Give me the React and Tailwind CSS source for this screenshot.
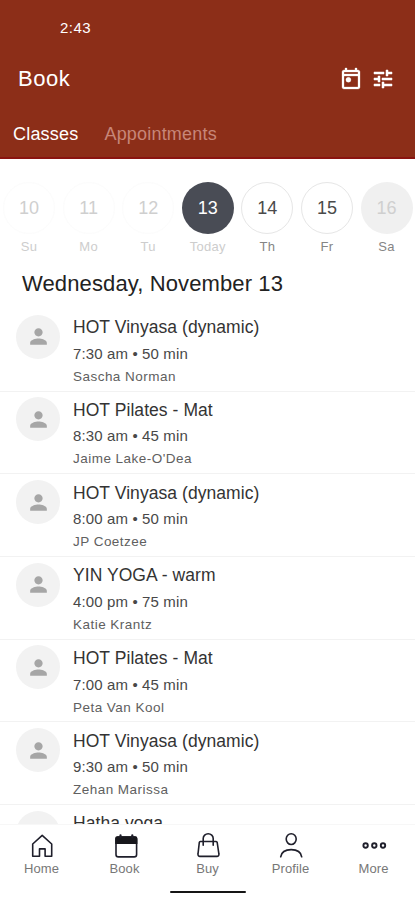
import React from 'react';

const past = 'border border-[#fcfcfc] text-[#cfcfcf]';
const open = 'border border-[#e6e6e6] text-[#4a4a4a]';

const days = [
  { n: '10', d: 'Su', circle: past, label: 'text-[#cdcdcd]' },
  { n: '11', d: 'Mo', circle: past, label: 'text-[#cdcdcd]' },
  { n: '12', d: 'Tu', circle: past, label: 'text-[#cdcdcd]' },
  { n: '13', d: 'Today', circle: 'bg-[#494c55] text-white', label: 'text-[#cdcdcd]' },
  { n: '14', d: 'Th', circle: open, label: 'text-[#858585]' },
  { n: '15', d: 'Fr', circle: open, label: 'text-[#858585]' },
  { n: '16', d: 'Sa', circle: 'bg-[#f0f0f0] text-[#cfcfcf]', label: 'text-[#858585]' },
];

const classes = [
  { title: 'HOT Vinyasa (dynamic)', time: '7:30 am • 50 min', who: 'Sascha Norman' },
  { title: 'HOT Pilates - Mat', time: '8:30 am • 45 min', who: "Jaime Lake-O'Dea" },
  { title: 'HOT Vinyasa (dynamic)', time: '8:00 am • 50 min', who: 'JP Coetzee' },
  { title: 'YIN YOGA - warm', time: '4:00 pm • 75 min', who: 'Katie Krantz' },
  { title: 'HOT Pilates - Mat', time: '7:00 am • 45 min', who: 'Peta Van Kool' },
  { title: 'HOT Vinyasa (dynamic)', time: '9:30 am • 50 min', who: 'Zehan Marissa' },
  { title: 'Hatha yoga', time: '', who: '', empty: true },
];

function CalendarIcon() {
  return (
    <svg className="h-6 w-6" viewBox="0 0 24 24" fill="white" stroke="white" strokeWidth="0.3">
      <path d="M19 3h-1V1h-2v2H8V1H6v2H5c-1.1 0-2 .9-2 2v15c0 1.1.9 2 2 2h14c1.1 0 2-.9 2-2V5c0-1.1-.9-2-2-2zm0 17H5V9h14v11zm0-13H5V5h14v2z" />
      <circle cx="9.4" cy="12.8" r="2.5" />
    </svg>
  );
}

function TuneIcon() {
  return (
    <svg className="h-6 w-6" viewBox="0 0 24 24" fill="white" stroke="white" strokeWidth="0.5">
      <path d="M3 17v2h6v-2H3zM3 5v2h10V5H3zm10 16v-2h8v-2h-8v-2h-2v6h2zM7 9v2H3v2h4v2h2V9H7zm14 4v-2H11v2h10zm-6-4h2V7h4V5h-4V3h-2v6z" />
    </svg>
  );
}

function Avatar({ empty }) {
  return (
    <div className="ml-4 mt-[5.7px] flex h-11 w-11 shrink-0 items-center justify-center rounded-full bg-[#f2f2f2]">
      {!empty && (
        <svg className="h-[25px] w-[25px]" viewBox="0 0 24 24" fill="#a6a6a6">
          <path d="M12 12c2.21 0 4-1.79 4-4s-1.79-4-4-4-4 1.79-4 4 1.79 4 4 4zm0 2c-2.67 0-8 1.34-8 4v2h16v-2c0-2.66-5.33-4-8-4z" />
        </svg>
      )}
    </div>
  );
}

const stroke = { fill: 'none', stroke: '#1f1f2b', strokeWidth: 1.6, strokeLinejoin: 'round', strokeLinecap: 'round' };

const tabs = [
  {
    label: 'Home',
    icon: <path {...stroke} d="M4.7 12 14.2 3.4l9.5 8.600V24.300h-6.600v-7.400h-5.600v7.400H4.700z" />,
  },
  {
    label: 'Book',
    icon: (
      <>
        <rect {...stroke} x="5" y="5" width="20.6" height="19.900" rx="2.400" />
        <path fill="#17171c" d="M4.200 12V6.500A2.200 2.200 0 0 1 6.400 4.200h17.800A2.200 2.200 0 0 1 26.400 6.500V12z" />
        <path {...stroke} strokeWidth="2.200" d="M9.500 3.300v2M21.300 3.300v2" />
      </>
    ),
  },
  {
    label: 'Buy',
    icon: (
      <>
        <path {...stroke} d="M6.300 9.500h15.800q.9 0 1.100 1l1.700 11.500a2 2 0 0 1-2 2.400H6a2 2 0 0 1-2-2.400l1.300-11.500q.2-1 1-1z" />
        <path {...stroke} d="M9.200 13.300V6.600a5 4.900 0 0 1 10 0V13.300" />
      </>
    ),
  },
  {
    label: 'Profile',
    icon: (
      <>
        <ellipse {...stroke} cx="14.200" cy="7.100" rx="5" ry="5.400" />
        <path {...stroke} d="M3.700 24.800c.700-4.600 4.200-7.200 10.500-7.200s9.800 2.600 10.500 7.200" />
      </>
    ),
  },
  {
    label: 'More',
    icon: (
      <>
        <circle {...stroke} strokeWidth="1.900" cx="5.600" cy="13.500" r="2.200" />
        <circle {...stroke} strokeWidth="1.900" cx="14.300" cy="13.500" r="2.200" />
        <circle {...stroke} strokeWidth="1.900" cx="23" cy="13.500" r="2.200" />
      </>
    ),
  },
];

export default function App() {
  return (
    <div className="flex h-[900px] w-[415px] flex-col overflow-hidden bg-white font-['Liberation_Sans',Arial,sans-serif]">
      <header className="flex h-[159px] shrink-0 flex-col border-b-2 border-[#8a1410] bg-[#8c2e18] text-white">
        <div className="pl-[60px] pt-[18px] text-[15px] leading-5 tracking-[0.5px]">2:43</div>
        <div className="mt-[25px] flex h-8 items-center pl-[18px] pr-5">
          <h1 className="flex-1 text-[22px] leading-8 tracking-[0.5px]">Book</h1>
          <CalendarIcon />
          <span className="ml-2 flex"><TuneIcon /></span>
        </div>
        <nav className="mt-[27px] flex pl-[13px] text-[18px] leading-6 tracking-[0.2px]">
          <span>Classes</span>
          <span className="ml-[26px] text-[#c78678]">Appointments</span>
        </nav>
      </header>

      <section className="flex h-[97px] w-[420px] shrink-0 pt-[23px]">
        {days.map((day) => (
          <div key={day.n} className="-ml-px mr-[0.6px] flex w-[60px] shrink-0 flex-col items-center">
            <div className={'flex h-[52px] w-[52px] items-center justify-center rounded-full text-[18px] ' + day.circle}>{day.n}</div>
            <div className={'mt-[5px] text-[13px] leading-4 tracking-[0.3px] ' + day.label}>{day.d}</div>
          </div>
        ))}
      </section>

      <h2 className="mt-3 h-[41px] shrink-0 pl-[22px] text-[22px] leading-8 tracking-[0.12px] text-[#222]">Wednesday, November 13</h2>

      <main className="min-h-0 flex-1 overflow-hidden">
        {classes.map((c, i) => (
          <div key={i} className="flex h-[82.7px] border-b border-[#f2f2f2]">
            <Avatar empty={c.empty} />
            <div className="ml-[13px] whitespace-nowrap">
              <div className="mt-[7.3px] text-[17.5px] leading-[22px] tracking-[0.06px] text-[#333]">{c.title}</div>
              <div className="mt-[5.5px] text-[15px] leading-5 tracking-[0.13px] text-[#484848]">{c.time}</div>
              <div className="mt-1 text-[13.5px] leading-[18px] tracking-[0.47px] text-[#606060]">{c.who}</div>
            </div>
          </div>
        ))}
      </main>

      <footer className="h-[76px] shrink-0 border-t border-[#f7f7f7] bg-white">
        <div className="grid grid-cols-5">
          {tabs.map((t) => (
            <div key={t.label} className="flex flex-col items-center pt-[7px]">
              <svg className="h-7 w-7" viewBox="0 0 28 28">{t.icon}</svg>
              <span className="mt-px text-[13px] leading-4 tracking-[0.1px] text-[#777]">{t.label}</span>
            </div>
          ))}
        </div>
        <div className="mx-auto mt-[14px] h-0.5 w-[76px] rounded-full bg-[#151515]" />
      </footer>
    </div>
  );
}
